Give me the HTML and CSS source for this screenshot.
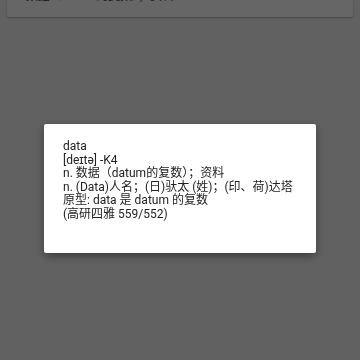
FILE: index.html
```html
<!DOCTYPE html>
<html lang="en">
<head>
  <meta charset="UTF-8" />
  <meta name="viewport" content="width=device-width, initial-scale=1" />
  <title>data</title>
  <link rel="stylesheet" href="styles.css">
</head>
<body>
  <div class="page">
    <div class="card">
      <p class="card-text">n. 数据（datum的复数）；资料</p>
    </div>
  </div>

  <div class="overlay">
    <div class="dialog">
      <p>data</p>
      <p>[deɪtə] -K4</p>
      <p>n. 数据（datum的复数）；资料</p>
      <p>n. (Data)人名；(日)驮太 (姓)；(印、荷)达塔</p>
      <p>原型: data 是 datum 的复数</p>
      <p>(高研四雅 559/552)</p>
    </div>
  </div>
</body>
</html>
```

FILE: styles.css
```css
* {
  box-sizing: border-box;
}

html, body {
  height: 100%;
}

body {
  margin: 0;
  background: #f2f2f2;
  font-family: Roboto, "Noto Sans CJK SC", sans-serif;
  overflow: hidden;
}

.page {
  padding: 0 7px;
}

.card {
  background: #fff;
  margin-top: -16px;
  height: 33px;
  padding: 5px 6px 0;
  border-radius: 2px;
  box-shadow: 0 1px 2px rgb(0 0 0 / 0.3);
}

.card-text {
  margin: 0;
  font-size: 12px;
  line-height: 14px;
  color: #333;
}

.overlay {
  position: fixed;
  inset: 0;
  background: rgb(0 0 0 / 0.6);
  display: flex;
  justify-content: center;
  align-items: flex-start;
  padding-top: 124px;
}

.dialog {
  background: #fff;
  width: 272px;
  height: 129px;
  padding: 16px 10px 0 19px;
  border-radius: 2px;
  box-shadow: 0 3px 8px rgb(0 0 0 / 0.4);
  color: #222;
  font-size: 12px;
  line-height: 13.6px;
}

.dialog p {
  margin: 0;
  white-space: nowrap;
}
```
